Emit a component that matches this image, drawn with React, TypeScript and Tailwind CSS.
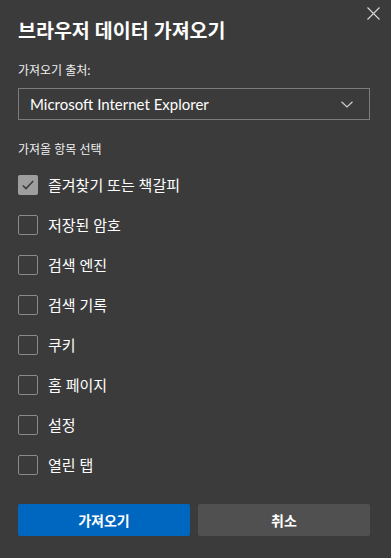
import React from "react";

const items = [
  { label: "즐겨찾기 또는 책갈피", checked: true },
  { label: "저장된 암호", checked: false },
  { label: "검색 엔진", checked: false },
  { label: "검색 기록", checked: false },
  { label: "쿠키", checked: false },
  { label: "홈 페이지", checked: false },
  { label: "설정", checked: false },
  { label: "열린 탭", checked: false },
];

export default function App() {
  return (
    <div
      className="relative w-[391px] h-[558px] bg-[#3b3b3b] text-white pl-[18px] pr-[21px] overflow-hidden"
      style={{ fontFamily: '"Noto Sans", "Noto Sans CJK KR", sans-serif' }}
    >
      <button className="absolute right-[11px] top-[7px] w-[13px] h-[13px]">
        <svg viewBox="0 0 13 13" className="w-[13px] h-[13px]" fill="none" stroke="#d8d8d8" strokeWidth="1.1">
          <path d="M0.5 0.5 L12.5 12.5 M12.5 0.5 L0.5 12.5" />
        </svg>
      </button>
      <h1 className="pt-[17px] text-[19.5px] leading-[28px] font-bold">브라우저 데이터 가져오기</h1>
      <div className="mt-[17px] text-[12px] leading-[18px] text-[#f0f0f0]">가져오기 출처:</div>
      <div className="mt-[8px] h-[32px] border border-[#7c7c7c] flex items-center justify-between pl-[11px] pr-[16px]">
        <span className="text-[15px] text-white" style={{ fontFamily: 'Lato, "Noto Sans", sans-serif' }}>
          Microsoft Internet Explorer
        </span>
        <svg viewBox="0 0 12 7" className="w-[12px] h-[7px]" fill="none" stroke="#d0d0d0" strokeWidth="1.2">
          <path d="M0.5 0.8 L6 6 L11.5 0.8" />
        </svg>
      </div>
      <div className="mt-[21px] text-[12px] leading-[18px] text-[#f0f0f0]">가져올 항목 선택</div>
      <div className="mt-[16px] flex flex-col gap-[20px]">
        {items.map((it) => (
          <div key={it.label} className="flex items-center h-[20px]">
            {it.checked ? (
              <div className="w-[20px] h-[20px] rounded-[2px] bg-[#9e9e9e] flex items-center justify-center">
                <svg viewBox="0 0 12 10" className="w-[12px] h-[10px]" fill="none" stroke="#3a3a3a" strokeWidth="1.5">
                  <path d="M0.8 5.5 L4 8.6 L11.2 1" />
                </svg>
              </div>
            ) : (
              <div className="w-[20px] h-[20px] rounded-[2px] border border-[#8a8a8a]" />
            )}
            <span className="ml-[10px] text-[15px] leading-[20px] text-white">{it.label}</span>
          </div>
        ))}
      </div>
      <div className="mt-[29px] flex gap-[8px]">
        <button className="flex-1 h-[32px] rounded-[2px] bg-[#0067c0] text-[14px] font-bold text-white">가져오기</button>
        <button className="flex-1 h-[32px] rounded-[2px] bg-[#505050] text-[14px] font-bold text-white">취소</button>
      </div>
    </div>
  );
}
